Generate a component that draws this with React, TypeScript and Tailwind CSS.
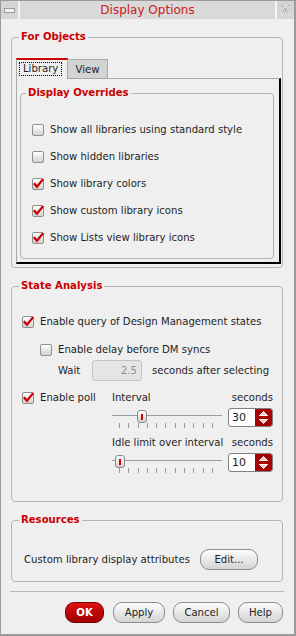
import React from "react";

function Check({ checked }: { checked: boolean }) {
  return (
    <span className="relative flex h-[12px] w-[12px] shrink-0 rounded-[2px] border border-[#8f8f8f] bg-linear-to-b from-[#ffffff] to-[#d2d2d2]">
      {checked && (
        <svg
          width="12"
          height="12"
          viewBox="0 0 12 12"
          className="absolute left-[-1px] top-[-1px] overflow-visible"
        >
          <path d="M2.6 6 L5 8.8 L10.4 2" fill="none" stroke="#cc0000" strokeWidth="2.3" strokeLinecap="square" />
        </svg>
      )}
    </span>
  );
}

function CheckRow({ checked, label, className = "" }: { checked: boolean; label: string; className?: string }) {
  return (
    <div className={"flex items-center gap-[6px] " + className}>
      <Check checked={checked} />
      <span className="whitespace-nowrap">{label}</span>
    </div>
  );
}

function Slider({ left }: { left: number }) {
  return (
    <div className="relative h-[20px] w-[110px]">
      <div className="flex h-[15px] flex-col justify-center">
        <div className="h-px w-full bg-[#9c9c9c]" />
      </div>
      <div className="flex h-[5px] justify-between pl-[7px] pr-[9px]">
        {Array.from({ length: 11 }).map((_, i) => (
          <div key={i} className="h-[5px] w-px bg-[#9a9a9a]" />
        ))}
      </div>
      <div
        className="absolute top-[2px] flex h-[13px] w-[10px] items-center justify-center rounded-[3px] border border-[#8a8a8a] bg-linear-to-b from-[#ffffff] to-[#d0d0d0]"
        style={{ left }}
      >
        <div className="h-[6px] w-[2px] bg-[#cc0000]" />
      </div>
    </div>
  );
}

function Spin({ value }: { value: string }) {
  return (
    <div className="flex h-[19px] w-[45px] overflow-hidden rounded-[3px] border border-[#808080] bg-white">
      <div className="flex flex-1 items-center pl-[3px] text-[11px]">{value}</div>
      <div className="flex w-[17px] flex-col items-center justify-center gap-[3px] bg-[#a60000]">
        <svg width="9" height="5" viewBox="0 0 9 5">
          <path d="M0.5 4.5 L4.5 0.5 L8.5 4.5 Z" fill="#e8c8c8" stroke="#ffffff" strokeWidth="1" />
        </svg>
        <svg width="9" height="5" viewBox="0 0 9 5">
          <path d="M0.5 0.5 L4.5 4.5 L8.5 0.5 Z" fill="#e8c8c8" stroke="#ffffff" strokeWidth="1" />
        </svg>
      </div>
    </div>
  );
}

function Btn({ label, w, primary = false }: { label: string; w: string; primary?: boolean }) {
  return (
    <div
      className={
        "flex h-[21px] items-center justify-center rounded-[9px] border " +
        w +
        (primary
          ? " border-[#7a0000] bg-linear-to-b from-[#dd1111] to-[#a00000] font-bold text-white"
          : " border-[#8c8c8c] bg-linear-to-b from-[#fdfdfd] to-[#d4d4d4]")
      }
    >
      {label}
    </div>
  );
}

export default function App() {
  return (
    <div className="flex h-[636px] w-[296px] flex-col overflow-hidden border-b-2 border-l border-r-2 border-t border-[#9b9b9b] bg-[#efefef] font-['DejaVu_Sans',Verdana,sans-serif] text-[10.1px] leading-[12px] text-[#1e1e1e]">
      {/* Title bar */}
      <div className="flex h-[18px] shrink-0 bg-[#d9d9d9]">
        <div className="flex w-[17px] items-center justify-center bg-[#d5d5d5]">
          <div className="h-[5px] w-[11px] border border-[#9a9a9a] bg-[#f3f3f3]" />
        </div>
        <div className="flex-1 border-l-2 border-r-2 border-[#f5f5f5] text-center text-[12px] leading-[18px] text-[#cc1a1a]">
          Display Options
        </div>
        <div className="flex w-[17px] items-center justify-center bg-[#d5d5d5]">
          <svg width="11" height="12" viewBox="0 0 11 12">
            <path d="M1.5 1.5 L9.5 10.5 M9.5 1.5 L1.5 10.5" stroke="#ffffff" strokeWidth="3" />
            <path d="M1.5 1.5 L9.5 10.5 M9.5 1.5 L1.5 10.5" stroke="#a0a0a0" strokeWidth="3" strokeDasharray="1 1" />
          </svg>
        </div>
      </div>

      {/* For Objects */}
      <fieldset className="ml-[10px] mt-[12px] w-[272px] rounded-[4px] border border-[#b4b4b4]">
        <legend className="ml-[7px] px-[2px] font-bold text-[#cc0000]">For Objects</legend>
        <div className="pb-[3px] pl-[4px] pr-[1px] pt-[15px]">
          <div className="flex h-[20px] items-end">
            <div className="relative z-10 -mb-px flex h-[21px] w-[52px] items-start border-l border-r border-t-2 border-[#a9a9a9] border-t-[#cc0000] bg-[#efefef] pl-[2px] pt-[2px]">
              <span className="h-[14px] border border-dotted border-black px-[3px] leading-[12px]">Library</span>
            </div>
            <div className="flex h-[19px] w-[40px] items-center justify-center border-r border-t border-[#a9a9a9] bg-[#d3d3d3] pt-[2px]">
              View
            </div>
          </div>
          <div className="w-[265px] border-b-2 border-l border-r-2 border-t border-[#a9a9a9] border-b-black border-r-black">
            <fieldset className="mb-[3px] ml-[3px] mt-[8px] w-[254px] rounded-[4px] border border-[#b4b4b4]">
              <legend className="ml-[5px] px-[2px] font-bold text-[#cc0000]">Display Overrides</legend>
              <div className="flex flex-col pb-[7px] pl-[11px] pt-[17px]">
                <CheckRow className="h-[27px]" checked={false} label="Show all libraries using standard style" />
                <CheckRow className="h-[27px]" checked={false} label="Show hidden libraries" />
                <CheckRow className="h-[27px]" checked={true} label="Show library colors" />
                <CheckRow className="h-[27px]" checked={true} label="Show custom library icons" />
                <CheckRow className="h-[27px]" checked={true} label="Show Lists view library icons" />
              </div>
            </fieldset>
          </div>
        </div>
      </fieldset>

      {/* State Analysis */}
      <fieldset className="ml-[10px] mt-[12px] w-[272px] rounded-[4px] border border-[#b4b4b4]">
        <legend className="ml-[7px] px-[2px] font-bold text-[#cc0000]">State Analysis</legend>
        <div className="flex flex-col pb-[29px] pl-[10px] pt-[22px]">
          <CheckRow className="h-[16px]" checked={true} label="Enable query of Design Management states" />
          <CheckRow className="ml-[18px] mt-[12px] h-[16px]" checked={false} label="Enable delay before DM syncs" />
          <div className="ml-[36px] mt-[2px] flex h-[21px] items-center">
            <span className="w-[34px]">Wait</span>
            <div className="flex h-[21px] w-[50px] items-center justify-end rounded-[3px] border border-[#c4c4c4] bg-[#e5e5e5] pr-[4px] text-[#8e8e8e]">
              2.5
            </div>
            <span className="ml-[10px] whitespace-nowrap">seconds after selecting</span>
          </div>
          <div className="mt-[10px] flex">
            <div className="w-[90px]">
              <CheckRow className="h-[14px]" checked={true} label="Enable poll" />
            </div>
            <div className="flex w-[161px] flex-col">
              <div className="flex h-[14px] items-center justify-between">
                <span>Interval</span>
                <span>seconds</span>
              </div>
              <div className="mt-[3px] flex h-[19px] items-start justify-between">
                <Slider left={25} />
                <Spin value="30" />
              </div>
              <div className="mt-[9px] flex h-[14px] items-center justify-between">
                <span>Idle limit over interval</span>
                <span>seconds</span>
              </div>
              <div className="mt-[3px] flex h-[19px] items-start justify-between">
                <Slider left={3} />
                <Spin value="10" />
              </div>
            </div>
          </div>
        </div>
      </fieldset>

      {/* Resources */}
      <fieldset className="ml-[10px] mt-[12px] w-[272px] rounded-[4px] border border-[#b4b4b4]">
        <legend className="ml-[7px] px-[2px] font-bold text-[#cc0000]">Resources</legend>
        <div className="mb-[11px] mt-[23px] flex h-[21px] items-center pl-[12px]">
          <span className="w-[176px] whitespace-nowrap">Custom library display attributes</span>
          <Btn label="Edit..." w="w-[58px]" />
        </div>
      </fieldset>

      <div className="ml-[9px] mt-[9px] h-px w-[274px] bg-[#b8b8b8]" />

      <div className="mt-[10px] flex justify-end gap-[8px] pr-[11px]">
        <div className="mr-px">
          <Btn label="OK" w="w-[39px]" primary />
        </div>
        <Btn label="Apply" w="w-[52px]" />
        <Btn label="Cancel" w="w-[57px]" />
        <Btn label="Help" w="w-[45px]" />
      </div>
    </div>
  );
}
